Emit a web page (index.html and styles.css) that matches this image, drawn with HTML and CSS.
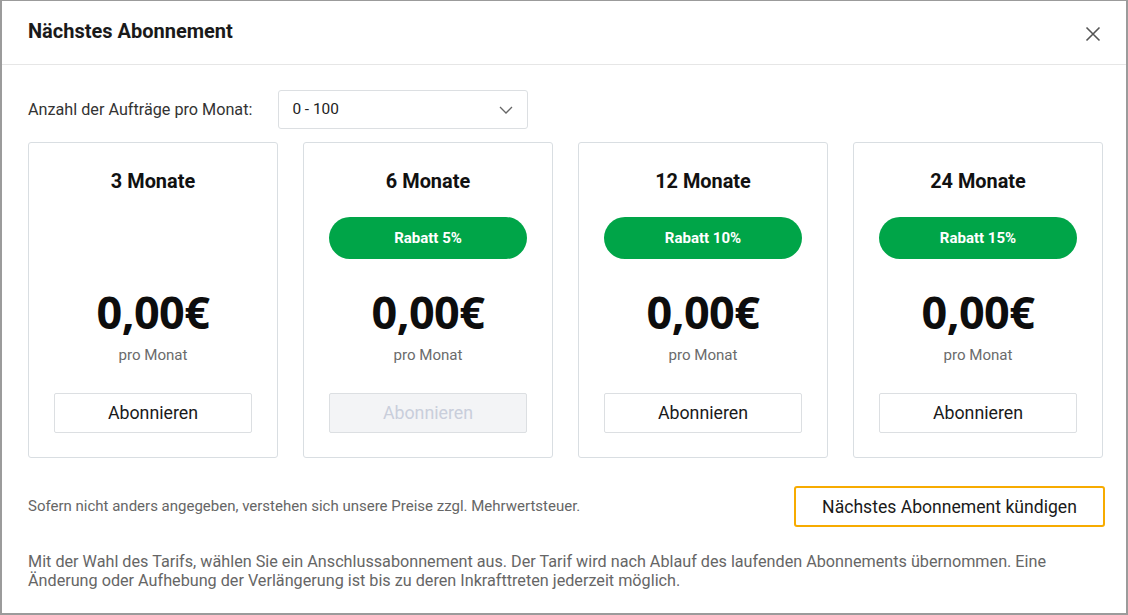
FILE: index.html
```html
<!DOCTYPE html>
<html lang="de">
<head>
<meta charset="utf-8">
<title>Nächstes Abonnement</title>
<link rel="stylesheet" href="styles.css">
</head>
<body>
<div class="modal">
  <header class="modal-header">
    <h1 class="modal-title">Nächstes Abonnement</h1>
    <button class="close" aria-label="Schließen">
      <svg width="16" height="16" viewBox="0 0 16 16"><path d="M1.5 1.5 L14.5 14.5 M14.5 1.5 L1.5 14.5" stroke="#555" stroke-width="1.6" fill="none"/></svg>
    </button>
  </header>
  <div class="modal-body">
    <div class="filter-row">
      <span class="filter-label">Anzahl der Aufträge pro Monat:</span>
      <div class="select">
        <span>0 - 100</span>
        <svg width="14" height="8" viewBox="0 0 14 8"><path d="M1 1 L7 7 L13 1" stroke="#666" stroke-width="1.3" fill="none"/></svg>
      </div>
    </div>
    <div class="plans">
      <div class="plan">
        <div class="plan-title">3 Monate</div>
        <div class="badge badge-empty"></div>
        <div class="price">0,00€</div>
        <div class="per">pro Monat</div>
        <button class="btn">Abonnieren</button>
      </div>
      <div class="plan">
        <div class="plan-title">6 Monate</div>
        <div class="badge">Rabatt 5%</div>
        <div class="price">0,00€</div>
        <div class="per">pro Monat</div>
        <button class="btn btn-disabled">Abonnieren</button>
      </div>
      <div class="plan">
        <div class="plan-title">12 Monate</div>
        <div class="badge">Rabatt 10%</div>
        <div class="price">0,00€</div>
        <div class="per">pro Monat</div>
        <button class="btn">Abonnieren</button>
      </div>
      <div class="plan">
        <div class="plan-title">24 Monate</div>
        <div class="badge">Rabatt 15%</div>
        <div class="price">0,00€</div>
        <div class="per">pro Monat</div>
        <button class="btn">Abonnieren</button>
      </div>
    </div>
    <div class="footer-row">
      <p class="note">Sofern nicht anders angegeben, verstehen sich unsere Preise zzgl. Mehrwertsteuer.</p>
      <button class="btn-cancel">Nächstes Abonnement kündigen</button>
    </div>
    <p class="info">Mit der Wahl des Tarifs, wählen Sie ein Anschlussabonnement aus. Der Tarif wird nach Ablauf des laufenden Abonnements übernommen. Eine Änderung oder Aufhebung der Verlängerung ist bis zu deren Inkrafttreten jederzeit möglich.</p>
  </div>
</div>
</body>
</html>
```

FILE: styles.css
```css
* { box-sizing: border-box; }
html, body { margin: 0; padding: 0; }
body {
  background: #9b9b9b;
  font-family: Roboto, "Liberation Sans", sans-serif;
  color: #1f1f1f;
  width: 1128px;
  height: 615px;
  overflow: hidden;
}
.modal {
  width: 1128px;
  height: 615px;
  background: #fff;
  border-style: solid;
  border-color: #9b9b9b;
  border-width: 1px 2px 2px 2px;
  display: flex;
  flex-direction: column;
}
.modal-header {
  height: 64px;
  border-bottom: 1px solid #e6e6e6;
  display: flex;
  align-items: center;
  justify-content: space-between;
  padding: 0 25px 0 26px;
}
.modal-title {
  margin: 0;
  font-size: 20px;
  font-weight: 700;
  color: #1a1a1a;
  padding-bottom: 3px;
}
.close {
  background: none;
  border: 0;
  padding: 0;
  width: 16px;
  height: 16px;
  margin-top: 2px;
  cursor: pointer;
}
.close svg { display: block; }
.modal-body {
  padding: 25px 22px 0 26px;
}
.filter-row {
  display: flex;
  align-items: center;
  gap: 26px;
}
.filter-label {
  font-size: 16.2px;
  color: #333;
}
.select {
  width: 250px;
  height: 39px;
  border: 1px solid #dcdfe2;
  border-radius: 3px;
  display: flex;
  align-items: center;
  justify-content: space-between;
  padding: 0 14px 0 13px;
  font-size: 15.4px;
  color: #222;
}
.select span { padding-bottom: 2px; }
.select svg { display: block; }
.plans {
  margin-top: 13px;
  display: grid;
  grid-template-columns: repeat(4, 250px);
  column-gap: 25px;
}
.plan {
  height: 316px;
  border: 1px solid #d9dee2;
  border-radius: 3px;
  padding: 27px 25px 0;
  display: flex;
  flex-direction: column;
  align-items: center;
}
.plan-title {
  font-size: 19.9px;
  font-weight: 700;
  line-height: 24px;
  color: #111;
}
.badge {
  margin-top: 23px;
  width: 198px;
  height: 42px;
  border-radius: 21px;
  background: #00a548;
  color: #fff;
  font-size: 15px;
  font-weight: 700;
  display: flex;
  align-items: center;
  justify-content: center;
}
.badge-empty { background: transparent; }
.price {
  margin-top: 28px;
  font-family: "Open Sans", "Liberation Sans", sans-serif;
  font-weight: 700;
  font-size: 45px;
  line-height: 50px;
  color: #0d0d0d;
  letter-spacing: -0.6px;
}
.per {
  margin-top: 8px;
  font-size: 15.1px;
  line-height: 20px;
  color: #6b6b6b;
}
.btn {
  margin-top: 28px;
  width: 198px;
  height: 40px;
  border: 1px solid #dcdfe2;
  border-radius: 2px;
  background: #fff;
  font-family: Roboto, "Liberation Sans", sans-serif;
  font-size: 17.8px;
  color: #1a1a1a;
  cursor: pointer;
  padding: 0 0 2px;
}
.btn-disabled {
  background: #f3f4f6;
  color: #c9cedb;
  cursor: default;
}
.footer-row {
  margin-top: 28px;
  display: flex;
  align-items: center;
  justify-content: space-between;
}
.note {
  margin: 0;
  font-size: 15px;
  color: #666;
  padding-bottom: 2px;
}
.btn-cancel {
  width: 311px;
  height: 41px;
  border: 2px solid #f7ab00;
  border-radius: 3px;
  background: #fff;
  font-family: Roboto, "Liberation Sans", sans-serif;
  font-size: 17.6px;
  color: #1a1a1a;
  cursor: pointer;
  margin-right: -1px;
}
.info {
  margin: 25px 0 0;
  font-size: 16.2px;
  line-height: 19px;
  color: #666;
  padding-right: 20px;
}
```
